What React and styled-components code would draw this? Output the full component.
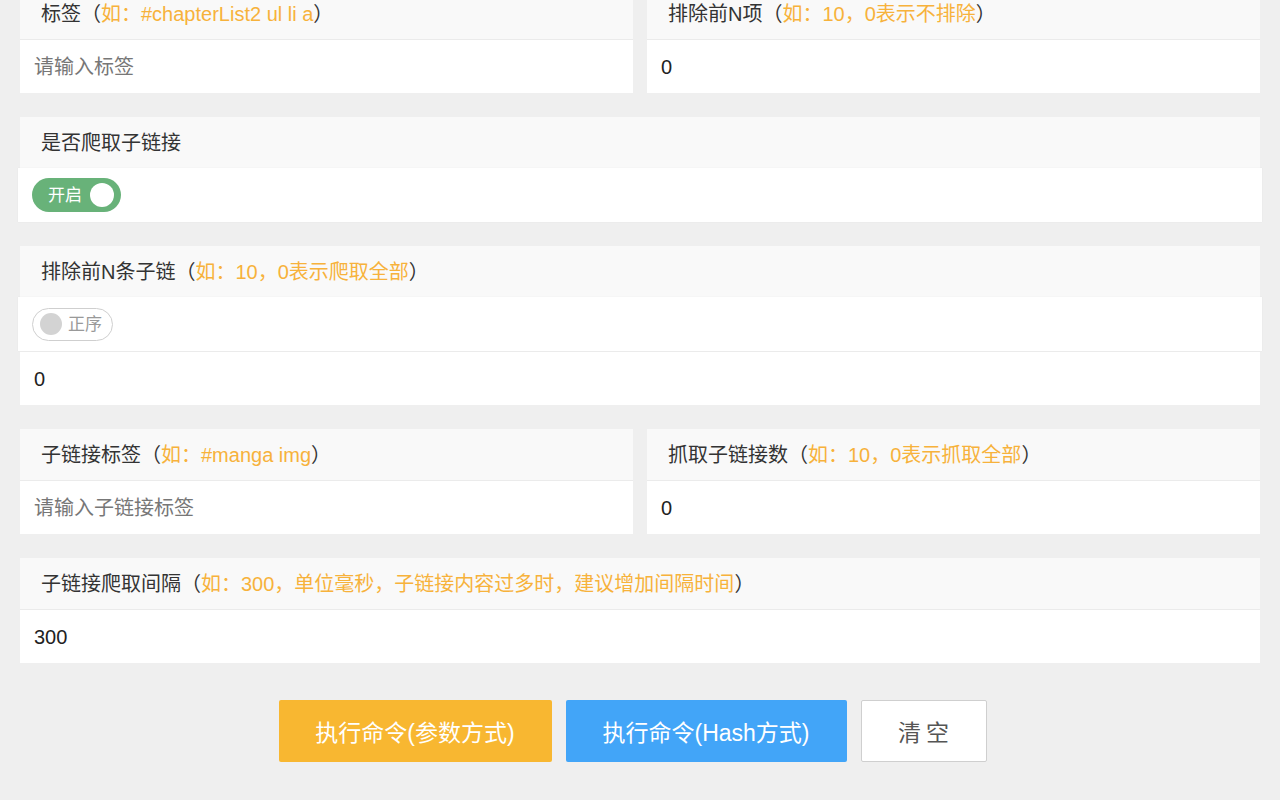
import React from 'react';
import styled, { createGlobalStyle } from 'styled-components';

const GlobalStyle = createGlobalStyle`
  html, body {
    margin: 0;
    padding: 0;
    background: #efefef;
  }
  body {
    font-family: "Liberation Sans", "Noto Sans CJK SC", sans-serif;
    color: #333;
  }
`;

const Page = styled.div`
  padding: 0 20px 38px;
  margin-top: -12px;
  display: flex;
  flex-direction: column;
  gap: 24px;
`;

const Row = styled.div`
  display: grid;
  grid-template-columns: 1fr 1fr;
  gap: 14px;
`;

const Card = styled.section`
  display: flex;
  flex-direction: column;
`;

const Header = styled.div`
  height: 51px;
  background: #f9f9f9;
  display: flex;
  align-items: center;
  padding: 0 21px;
  font-size: 20px;
  line-height: 1;
  color: #333;
`;

const Hint = styled.span`
  color: #f7b23b;
`;

const Field = styled.div`
  box-sizing: border-box;
  height: 54px;
  background: #fff;
  border-top: 1px solid #ebebeb;
  display: flex;
  align-items: center;
  padding: 0 14px;
  font-size: 20px;
  line-height: 1;
  color: ${p => (p.$placeholder ? '#777' : '#222')};
`;

const SwitchRow = styled.div`
  height: 54px;
  background: #fff;
  margin: 0 -2px;
  display: flex;
  align-items: center;
  padding: 0 14px;
  box-shadow: 0 0 1px rgba(0, 0, 0, 0.08);
`;

const Switch = styled.div`
  box-sizing: border-box;
  height: ${p => (p.$on ? 34 : 33)}px;
  width: ${p => (p.$on ? 89 : 81)}px;
  border-radius: 17px;
  display: flex;
  align-items: center;
  gap: 6px;
  flex-direction: ${p => (p.$on ? 'row' : 'row-reverse')};
  padding: 0 ${p => (p.$on ? 7 : 0)}px 0 ${p => (p.$on ? 16 : 7)}px;
  background: ${p => (p.$on ? '#68b279' : '#fff')};
  border: ${p => (p.$on ? 'none' : '1px solid #cfcfcf')};
  font-size: 17px;
  line-height: 1;
  color: ${p => (p.$on ? '#fff' : '#999')};
`;

const Knob = styled.span`
  width: ${p => (p.$on ? 24 : 22)}px;
  height: ${p => (p.$on ? 24 : 22)}px;
  border-radius: 50%;
  background: ${p => (p.$on ? '#fff' : '#d3d3d3')};
  flex-shrink: 0;
`;

const SwitchText = styled.span`
  flex: 1;
  text-align: left;
`;

const Actions = styled.div`
  display: flex;
  justify-content: center;
  gap: 14px;
  padding: 13px 15px 0 0;
`;

const Button = styled.button`
  height: 62px;
  width: ${p => p.$w}px;
  border-radius: 2px;
  font-family: inherit;
  font-size: 23px;
  cursor: pointer;
  border: ${p => (p.$variant === 'plain' ? '1px solid #cfcfcf' : 'none')};
  background: ${p =>
    p.$variant === 'warn' ? '#f8b731' : p.$variant === 'primary' ? '#42a5f8' : '#fff'};
  color: ${p => (p.$variant === 'plain' ? '#555' : '#fff')};
  letter-spacing: ${p => (p.$variant === 'plain' ? '5px' : '0')};
  padding: 0;
  text-indent: ${p => (p.$variant === 'plain' ? '5px' : '0')};
`;

const TextCard = ({ title, hint, value, placeholder }) => (
  <Card>
    <Header>
      {title}
      {hint && (
        <>
          （<Hint>{hint}</Hint>）
        </>
      )}
    </Header>
    <Field $placeholder={!value}>{value || placeholder}</Field>
  </Card>
);

const App = () => {
  return (
    <>
      <GlobalStyle />
      <Page>
        <Row>
          <TextCard title="标签" hint="如：#chapterList2 ul li a" placeholder="请输入标签" />
          <TextCard title="排除前N项" hint="如：10，0表示不排除" value="0" />
        </Row>

        <Card>
          <Header>是否爬取子链接</Header>
          <SwitchRow>
            <Switch $on>
              <SwitchText>开启</SwitchText>
              <Knob $on />
            </Switch>
          </SwitchRow>
        </Card>

        <Card>
          <Header>
            排除前N条子链（<Hint>如：10，0表示爬取全部</Hint>）
          </Header>
          <SwitchRow>
            <Switch>
              <SwitchText>正序</SwitchText>
              <Knob />
            </Switch>
          </SwitchRow>
          <Field>0</Field>
        </Card>

        <Row>
          <TextCard title="子链接标签" hint="如：#manga img" placeholder="请输入子链接标签" />
          <TextCard title="抓取子链接数" hint="如：10，0表示抓取全部" value="0" />
        </Row>

        <TextCard
          title="子链接爬取间隔"
          hint="如：300，单位毫秒，子链接内容过多时，建议增加间隔时间"
          value="300"
        />

        <Actions>
          <Button $variant="warn" $w={273}>执行命令(参数方式)</Button>
          <Button $variant="primary" $w={281}>执行命令(Hash方式)</Button>
          <Button $variant="plain" $w={126}>清空</Button>
        </Actions>
      </Page>
    </>
  );
};

export default App;
